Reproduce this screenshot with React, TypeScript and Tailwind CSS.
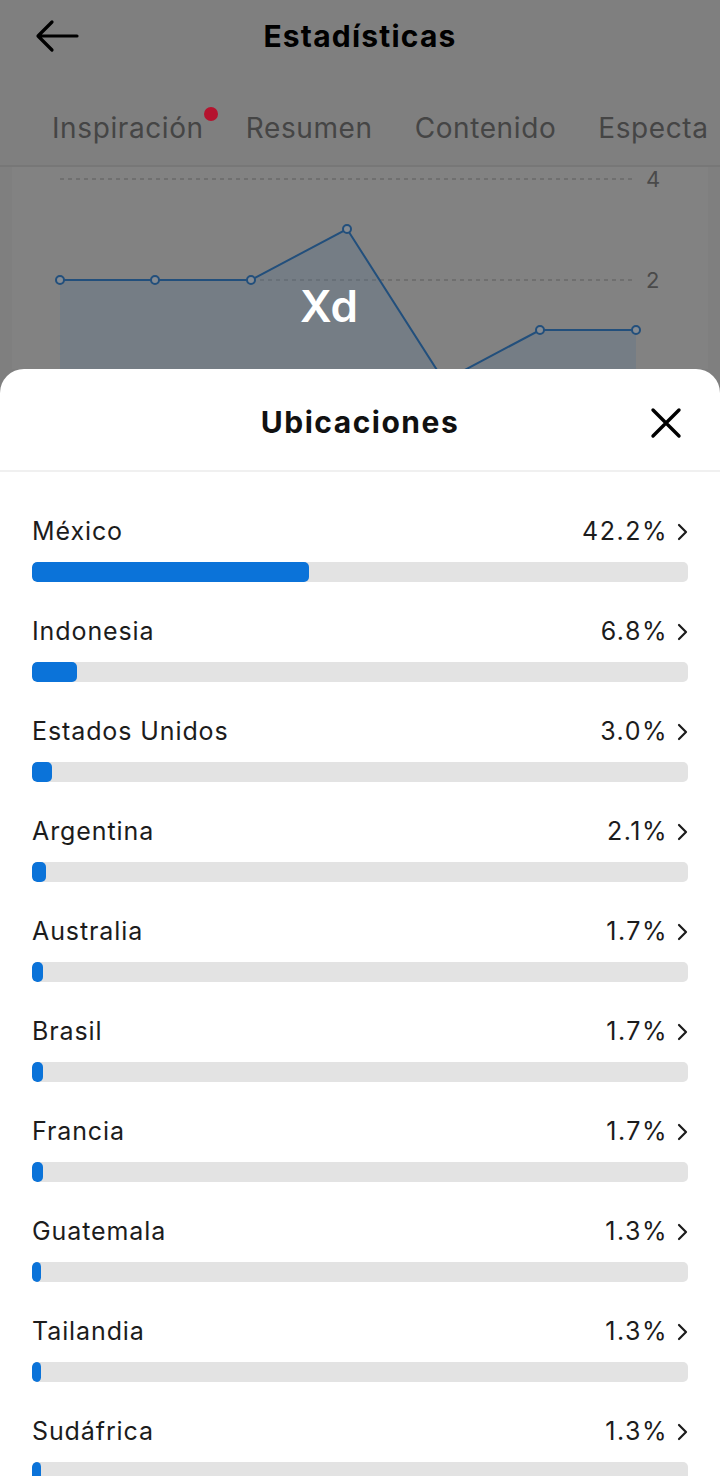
const locations = [
  { name: "México", pct: 42.2 },
  { name: "Indonesia", pct: 6.8 },
  { name: "Estados Unidos", pct: 3.0 },
  { name: "Argentina", pct: 2.1 },
  { name: "Australia", pct: 1.7 },
  { name: "Brasil", pct: 1.7 },
  { name: "Francia", pct: 1.7 },
  { name: "Guatemala", pct: 1.3 },
  { name: "Tailandia", pct: 1.3 },
  { name: "Sudáfrica", pct: 1.3 },
];

const points = [
  [60, 113],
  [155, 113],
  [251, 113],
  [347, 62],
  [444, 214],
  [540, 163],
  [636, 163],
];

function Chart() {
  const line = points.map((p) => p.join(",")).join(" ");
  const area = `60,260 ${line} 636,260`;
  return (
    <div className="relative h-[202px] overflow-hidden mx-[12px] bg-[#828282]">
      <svg width="696" height="202" viewBox="12 0 696 202" className="block">
        <line x1="60" y1="12" x2="636" y2="12" stroke="#6a6a6a" strokeWidth="1.5" strokeDasharray="4 4" />
        <line x1="60" y1="113" x2="636" y2="113" stroke="#6a6a6a" strokeWidth="1.5" strokeDasharray="4 4" />
        <text x="646" y="20" fill="#4a4a4a" fontSize="22" fontFamily="Inter, sans-serif">4</text>
        <text x="646" y="121" fill="#4a4a4a" fontSize="22" fontFamily="Inter, sans-serif">2</text>
        <polygon points={area} fill="#5a7590" fillOpacity="0.3" />
        <polyline points={line} fill="none" stroke="#224f7c" strokeWidth="2" />
        {points.map(([x, y]) => (
          <circle key={x} cx={x} cy={y} r="4" fill="#858b92" stroke="#224f7c" strokeWidth="2" />
        ))}
      </svg>
      <span className="absolute left-[288px] top-[117px] text-[44px] font-semibold leading-none text-white">Xd</span>
    </div>
  );
}

function Row({ name, pct }: { name: string; pct: number }) {
  return (
    <div className="flex flex-col pb-[33px]">
      <div className="flex h-[34px] items-center justify-between">
        <span className="text-[25px] tracking-[0.9px] text-[#1c1c1c]">{name}</span>
        <div className="flex items-center gap-[9px]">
          <span className="text-[25px] tracking-[1.5px] text-[#1c1c1c]">{pct.toFixed(1)}%</span>
          <svg width="11" height="18" viewBox="0 0 11 18" fill="none">
            <path d="M2 2l7 7-7 7" stroke="#1c1c1c" strokeWidth="2.2" strokeLinecap="round" strokeLinejoin="round" />
          </svg>
        </div>
      </div>
      <div className="mt-[13px] h-[20px] rounded-[5px] bg-[#e3e3e3] overflow-hidden">
        <div className="h-full rounded-[5px] bg-[#0b73d9]" style={{ width: `${pct}%`, minWidth: 7 }} />
      </div>
    </div>
  );
}

export default function App() {
  return (
    <div className="h-[1476px] w-[720px] overflow-hidden bg-[#7f7f7f] font-['Inter',sans-serif]">
      <div className="grid h-[72px] grid-cols-[100px_1fr_100px] items-center">
        <svg className="ml-[35px]" width="44" height="34" viewBox="0 0 44 34" fill="none">
          <path d="M42 17H4M17 3L3 17l14 14" stroke="#000" strokeWidth="3.2" strokeLinecap="round" strokeLinejoin="round" />
        </svg>
        <h1 className="text-center text-[30px] font-bold tracking-[1.2px] text-black">Estadísticas</h1>
        <div />
      </div>
      <div className="flex h-[95px] items-center gap-[42px] pl-[52px] pt-[18px] border-b-2 border-[#777] whitespace-nowrap overflow-hidden tracking-[0.6px]">
        <span className="relative text-[28px] text-[#454545]">
          Inspiración
          <span className="absolute -right-[14px] top-[0px] h-[14px] w-[14px] rounded-full bg-[#b5132e]" />
        </span>
        <span className="text-[28px] text-[#454545]">Resumen</span>
        <span className="text-[28px] text-[#454545]">Contenido</span>
        <span className="text-[28px] text-[#454545]">Especta</span>
      </div>
      <Chart />
      <div className="rounded-t-[24px] bg-white">
        <div className="relative flex h-[103px] items-center justify-center pt-[6px] border-b-2 border-[#f0f0f0]">
          <h2 className="text-[30px] font-bold tracking-[1.5px] text-[#111]">Ubicaciones</h2>
          <svg className="absolute right-[38px] top-[38px]" width="32" height="32" viewBox="0 0 32 32" fill="none">
            <path d="M3 3l26 26M29 3L3 29" stroke="#000" strokeWidth="3.4" strokeLinecap="round" />
          </svg>
        </div>
        <div className="px-[32px] pt-[43px]">
          {locations.map((l) => (
            <Row key={l.name} name={l.name} pct={l.pct} />
          ))}
        </div>
      </div>
    </div>
  );
}
